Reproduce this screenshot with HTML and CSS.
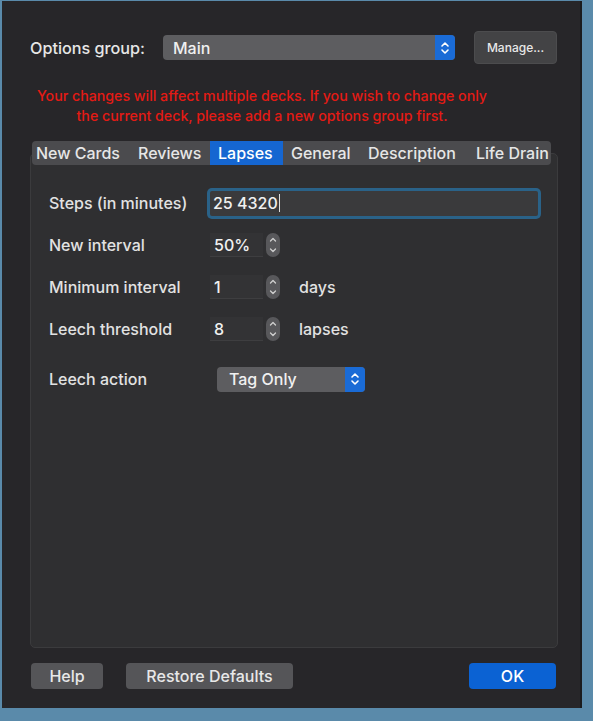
FILE: index.html
```html
<!DOCTYPE html>
<html>
<head>
<meta charset="utf-8">
<link rel="stylesheet" href="styles.css">
</head>
<body>
<div class="window">
  <div class="top-row">
    <span class="label">Options group:</span>
    <div class="select main-select">
      <span class="select-text">Main</span>
      <span class="select-arrows">
        <svg width="10" height="14" viewBox="0 0 10 14"><path d="M2 5 L5 2 L8 5 M2 9 L5 12 L8 9" fill="none" stroke="#fff" stroke-width="1.6" stroke-linecap="round" stroke-linejoin="round"/></svg>
      </span>
    </div>
    <button class="btn manage">Manage...</button>
  </div>
  <p class="warning">Your changes will affect multiple decks. If you wish to change only<br>the current deck, please add a new options group first.</p>
  <div class="tabs">
    <span class="tab tab-new">New Cards</span>
    <span class="tab tab-rev">Reviews</span>
    <span class="tab tab-lapses active">Lapses</span>
    <span class="tab tab-gen">General</span>
    <span class="tab tab-desc">Description</span>
    <span class="tab tab-life">Life Drain</span>
  </div>
  <div class="panel">
    <div class="row">
      <span class="field-label">Steps (in minutes)</span>
      <div class="text-input focused">25 4320<span class="caret"></span></div>
    </div>
    <div class="row">
      <span class="field-label">New interval</span>
      <div class="num-input">50%</div>
      <span class="spinner"><svg width="8" height="20" viewBox="0 0 8 20"><path d="M1.5 6 L4 3.5 L6.5 6 M1.5 14 L4 16.5 L6.5 14" fill="none" stroke="#cfcfcf" stroke-width="1.3" stroke-linecap="round" stroke-linejoin="round"/></svg></span>
    </div>
    <div class="row">
      <span class="field-label">Minimum interval</span>
      <div class="num-input">1</div>
      <span class="spinner"><svg width="8" height="20" viewBox="0 0 8 20"><path d="M1.5 6 L4 3.5 L6.5 6 M1.5 14 L4 16.5 L6.5 14" fill="none" stroke="#cfcfcf" stroke-width="1.3" stroke-linecap="round" stroke-linejoin="round"/></svg></span>
      <span class="unit">days</span>
    </div>
    <div class="row">
      <span class="field-label">Leech threshold</span>
      <div class="num-input">8</div>
      <span class="spinner"><svg width="8" height="20" viewBox="0 0 8 20"><path d="M1.5 6 L4 3.5 L6.5 6 M1.5 14 L4 16.5 L6.5 14" fill="none" stroke="#cfcfcf" stroke-width="1.3" stroke-linecap="round" stroke-linejoin="round"/></svg></span>
      <span class="unit">lapses</span>
    </div>
    <div class="row row-action">
      <span class="field-label">Leech action</span>
      <div class="select action-select">
        <span class="select-text">Tag Only</span>
        <span class="select-arrows">
          <svg width="10" height="14" viewBox="0 0 10 14"><path d="M2 5 L5 2 L8 5 M2 9 L5 12 L8 9" fill="none" stroke="#fff" stroke-width="1.6" stroke-linecap="round" stroke-linejoin="round"/></svg>
        </span>
      </div>
    </div>
  </div>
  <div class="bottom-row">
    <button class="btn help">Help</button>
    <button class="btn restore">Restore Defaults</button>
    <button class="btn ok">OK</button>
  </div>
</div>
</body>
</html>
```

FILE: styles.css
```css
html, body {
  margin: 0;
  padding: 0;
}
body {
  background: #5a8aaa;
  width: 593px;
  height: 721px;
  overflow: hidden;
  font-family: Inter, "Liberation Sans", sans-serif;
  font-weight: 500;
  color: #e2e2e2;
}
.window {
  margin: 1px 0 0 2px;
  width: 580px;
  height: 707px;
  background: #272629;
  border-right: 2px solid #1b1b1d;
  box-sizing: border-box;
  padding: 30px 0 0 28px;
  display: flex;
  flex-direction: column;
}
.top-row {
  display: flex;
  align-items: center;
  height: 33px;
}
.label {
  font-size: 16.2px;
  width: 133px;
  color: #e6e6e6;
}
.select {
  display: flex;
  align-items: center;
  background: #5d5d60;
  border-radius: 4px;
  height: 25px;
  box-sizing: border-box;
  overflow: hidden;
}
.select-text {
  flex: 1;
  font-size: 16px;
  color: #f0f0f0;
}
.select-arrows {
  width: 20px;
  height: 100%;
  background: #1a6bd6;
  display: flex;
  align-items: center;
  justify-content: center;
}
.main-select {
  width: 292px;
  padding-left: 10px;
}
.btn {
  font-family: Inter, "Liberation Sans", sans-serif;
  font-weight: 500;
  border: none;
  background: #555558;
  color: #e8e8e8;
  border-radius: 4px;
  padding: 0;
}
.manage {
  margin-left: 19px;
  width: 83px;
  height: 33px;
  font-size: 12px;
  background: #434345;
  border: 1px solid #4c4c4e;
}
.warning {
  margin: 22px 0 0 3px;
  width: 458px;
  text-align: center;
  color: #e41a14;
  font-size: 14.2px;
  line-height: 20px;
}
.tabs {
  margin: 15px 0 0 2px;
  width: 519px;
  height: 24px;
  display: flex;
  align-items: center;
  background: #4b4b4e;
  border-radius: 4px;
  position: relative;
  z-index: 1;
  font-size: 16px;
  color: #e6e6e6;
  overflow: hidden;
}
.tab {
  height: 100%;
  box-sizing: border-box;
  display: flex;
  align-items: center;
  padding: 0 0 0 8px;
  white-space: nowrap;
}
.tab-new { padding-left: 4px; width: 98px; }
.tab-rev { width: 80px; }
.tab-lapses { width: 73px; }
.tab-gen { width: 77px; }
.tab-desc { width: 108px; }
.tab-life { width: 83px; }
.tab.active {
  background: #1566d1;
  color: #fff;
}
.panel {
  margin-top: -12px;
  width: 528px;
  height: 495px;
  box-sizing: border-box;
  background: #2f2f31;
  border: 1px solid #3b3b3d;
  border-radius: 5px;
  padding: 28px 0 0 18px;
}
.row {
  display: flex;
  align-items: center;
  height: 42px;
}
.field-label {
  width: 161px;
  font-size: 16px;
  color: #e2e2e2;
}
.text-input {
  width: 328px;
  height: 25px;
  box-sizing: border-box;
  background: #3a3a3c;
  box-shadow: 0 0 0 3px #2a6288;
  border-radius: 2px;
  padding-left: 3px;
  display: flex;
  align-items: center;
  font-size: 16px;
  color: #f0f0f0;
}
.caret {
  display: inline-block;
  width: 1px;
  height: 18px;
  background: #ddd;
  margin-left: 1px;
}
.num-input {
  width: 53px;
  height: 24px;
  box-sizing: border-box;
  background: #333335;
  border-bottom: 1px solid #3e3e40;
  padding-left: 4px;
  display: flex;
  align-items: center;
  font-size: 16px;
  color: #f0f0f0;
}
.spinner {
  margin-left: 3px;
  width: 14px;
  height: 24px;
  border-radius: 7px;
  background: #58585b;
  display: flex;
  align-items: center;
  justify-content: center;
}
.unit {
  margin-left: 19px;
  font-size: 16px;
  color: #e2e2e2;
}
.row-action {
  margin-top: 8px;
}
.action-select {
  margin-left: 7px;
  width: 148px;
  padding-left: 12px;
}
.bottom-row {
  margin-top: 15px;
  display: flex;
  align-items: center;
  height: 26px;
}
.bottom-row .btn {
  height: 26px;
  font-size: 16px;
}
.help {
  margin-left: 1px;
  width: 72px;
}
.restore {
  margin-left: 23px;
  width: 167px;
}
.ok {
  margin-left: 176px;
  width: 87px;
  background: #0b62d3 !important;
  color: #fff !important;
}
```
